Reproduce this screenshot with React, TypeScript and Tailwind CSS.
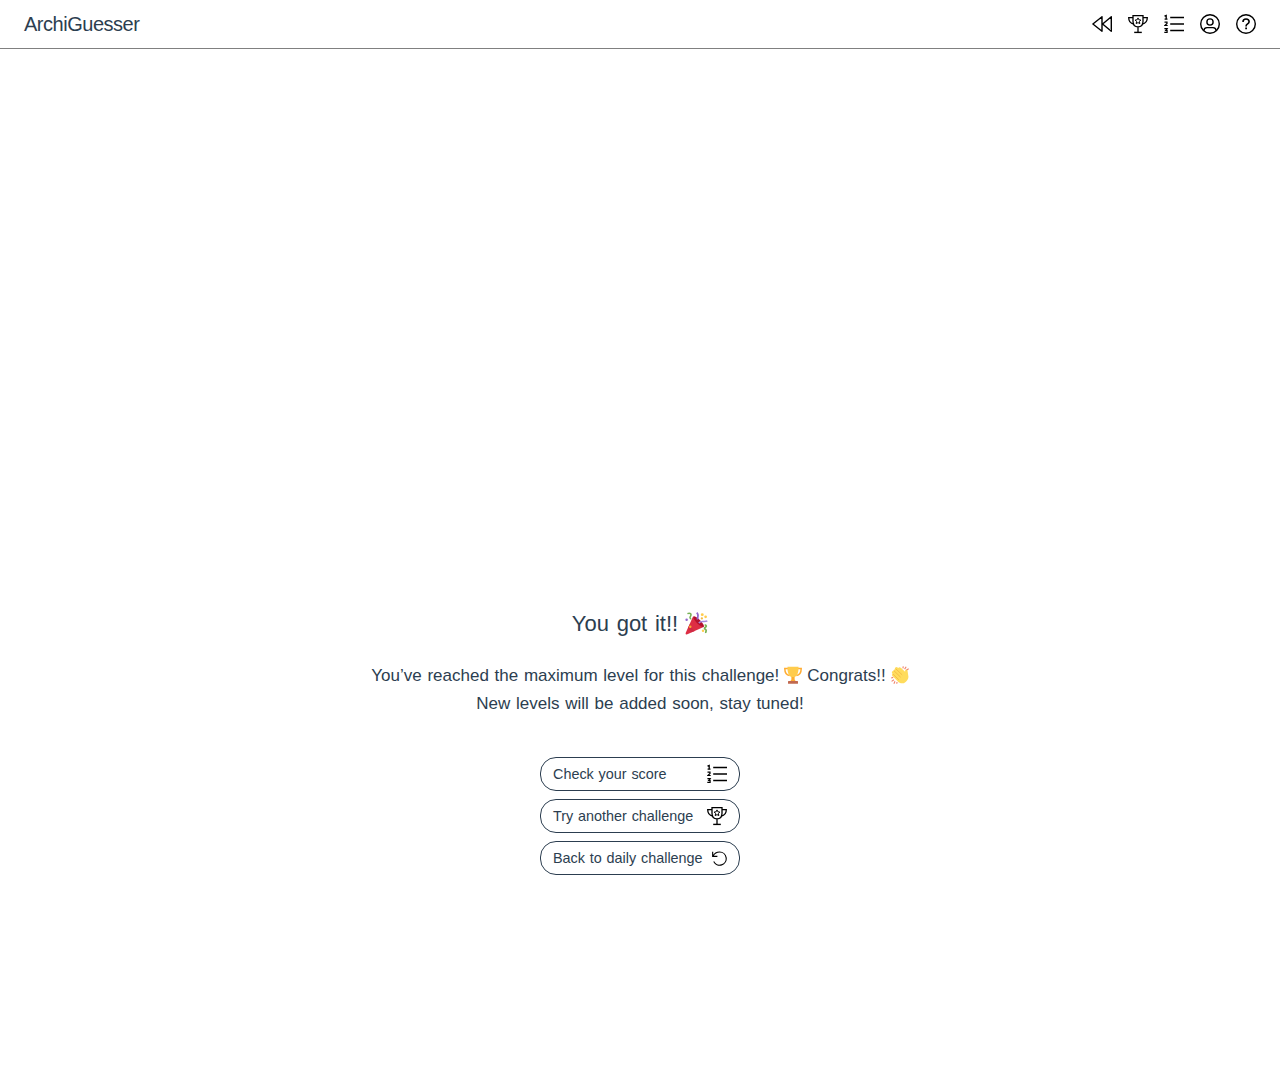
import type { ReactNode } from "react";

type IconProps = { className?: string };

function Icon({ children, className = "size-5" }: { children: ReactNode; className?: string }) {
  return (
    <svg viewBox="0 0 20 20" className={`${className} shrink-0 text-black`} fill="none" stroke="currentColor" strokeWidth="1.4">
      {children}
    </svg>
  );
}

const RewindIcon = () => (
  <Icon>
    <path d="M10 2.700v14.600L.9 10zM19.300 2.700v14.600L10.600 10z" strokeLinejoin="round" />
  </Icon>
);

const TrophyIcon = () => (
  <Icon>
    <path d="M5 1.600h10v5.600c0 3.300-2 5.600-5 5.600S5 10.500 5 7.200zM10 12.800v5.500" strokeWidth="1.300" />
    <path d="M6.200 18.400h7.600" strokeWidth="1.400" />
    <path d="M5 3.600H.700c0 3.500 1.500 6 5 6.400M15 3.600h4.300c0 3.500-1.500 6-5 6.400" strokeWidth="1.300" />
    <path d="M10 3.900l.9 1.900 2 .3-1.500 1.400.4 2.100-1.800-1-1.800 1 .4-2.100-1.500-1.400 2-.3z" strokeWidth="1" />
  </Icon>
);

const ListIcon = () => (
  <Icon>
    <path d="M6.200 3.500H20M6.200 10H20M6.200 16.500H20" strokeWidth="1.300" />
    <path d="M.5 2.100l1.700-.7v3.800M.6 5.200h2.900" strokeWidth="1.300" />
    <path d="M.5 8.200h2.500v1.300L.9 11.500h2.800" strokeWidth="1.200" />
    <path d="M.4 14.700h2.700L1.800 16.300h1.300v2.100H.3" strokeWidth="1.200" />
  </Icon>
);

const UserIcon = () => (
  <Icon>
    <circle cx="10" cy="10" r="9.300" />
    <circle cx="10" cy="8" r="3.100" />
    <path d="M3.900 16.800c0-2 1.200-3.200 3.100-3.200h6c1.900 0 3.100 1.200 3.100 3.200" />
  </Icon>
);

const HelpIcon = () => (
  <Icon>
    <circle cx="10" cy="10" r="9.300" />
    <path d="M7 7.900c0-1.800 1.200-2.900 3-2.900s3.100 1.100 3.100 2.700c0 2.100-3 2.100-3 4.200v.5" strokeWidth="1.600" />
    <path d="M10.100 13.500v1.800" strokeWidth="1.800" />
  </Icon>
);

const UndoIcon = () => (
  <Icon className="size-[15px]">
    <path d="M.9 1v6.200h6.300M1.500 6.700C3 3.500 6.300 1.300 10.200 1.300a8.800 8.800 0 1 1-7.900 12.800" strokeWidth="1.500" />
  </Icon>
);

function PartyEmoji({ className }: IconProps) {
  return (
    <svg viewBox="0 0 24 24" className={className} fill="none">
      <path d="M8.500 4.500C10 8 16 14 20 15.500L2.500 23.300C1 23.800.3 23 .8 21.600z" fill="#dd2e44" />
      <path d="M5.200 12.500c.8 3 2.500 5.500 5 7.200l-3.400 1.500C5 19.800 3.800 18 3.300 16.200z" fill="#cf2b45" />
      <ellipse cx="14.200" cy="10.100" rx="2.200" ry="7.600" transform="rotate(-45 14.200 10.100)" fill="#b3122d" />
      <path d="M2.500 1.700c3-1.300 4.500.5 3.300 2.500-1 1.600-.7 2.700.7 3" stroke="#77b255" strokeWidth="1.600" />
      <path d="M20.500 13.500c2.500.3 2 2 .4 2.700-1.200.8-.3 1.700.8 2.200 1.200.8-.3 1.800 0 3.500" stroke="#77b255" strokeWidth="1.800" />
      <path d="M12.200.8c2.800 2 .8 4.200.8 7" stroke="#9266cc" strokeWidth="1.800" />
      <path d="M14.500 11.500c2-3 5-.7 8.800-2" stroke="#a98be0" strokeWidth="1.700" />
      <circle cx="18" cy="2.800" r="1.500" fill="#ffcc4d" />
      <circle cx="21.500" cy="5" r="1.400" fill="#ffcc4d" />
      <circle cx="17.600" cy="6.700" r="1.200" fill="#f4b942" />
      <circle cx="18.800" cy="19.500" r="1.300" fill="#ffcc4d" />
      <circle cx="1.700" cy="8.200" r="1.300" fill="#9266cc" />
      <circle cx="5.500" cy="15.500" r="1.300" fill="#ffac33" />
    </svg>
  );
}

function CupEmoji({ className }: IconProps) {
  return (
    <svg viewBox="0 0 18 18" className={className} fill="none">
      <path d="M4 2.400H.8c0 4 1.200 6.600 4.900 7.200M14 2.400h3.200c0 4-1.200 6.600-4.900 7.200" stroke="#ffac33" strokeWidth="1.500" />
      <path d="M3.500.7h11c.2 5.300-1 9.100-4 10.500v4h-3v-4C4.500 9.800 3.300 6 3.500.7z" fill="#ffcc4d" />
      <path d="M7.600 11h2.800v2.400l1.700 2H5.900l1.700-2z" fill="#ffac33" />
      <rect x="4" y="15" width="10" height="2.700" rx=".5" fill="#c1694f" />
    </svg>
  );
}

function ClapEmoji({ className }: IconProps) {
  return (
    <svg viewBox="0 0 18 18" className={className} fill="none">
      <path d="M1.200 5.600L3.400 3.800 4.200 1.800q1-1.300 2.400-.2l.6.500q1-1.600 2.600-.4l4.300 4.100.2-1.700q1.300-1.500 2.200.3l.9 6c.3 2.600-2.600 6.700-5.600 6.900-2.200.2-3.800-.6-5.200-2.100L1.200 9.800q-.8-1.300.4-2.100-1.400-1-.4-2.100z" fill="#ffdc5d" />
      <path d="M4.800 2.800l6.400 6.100M2.900 4.700l6.700 6.500M1.800 7.900l6 5.900" stroke="#f2b544" strokeWidth=".8" />
      <path d="M12.300.3l-.4 2.100M15.200.7l-1.600 2.400M17.700 2.700l-2.200 1.300M.2 12l2-.6M.6 15.400L3 13.700M2.900 17.700l1.100-2.400M5.800 17.800l.2-1.800" stroke="#f0836b" strokeWidth="1.100" />
    </svg>
  );
}

function ActionButton({ children, icon }: { children: ReactNode; icon: ReactNode }) {
  return (
    <button className="flex h-[34px] w-[200px] items-center justify-between rounded-2xl border border-[#2c3e50] px-3 text-[14.4px] [word-spacing:0.8px]">
      <span className="pt-0.5 whitespace-nowrap">{children}</span>
      {icon}
    </button>
  );
}

export default function App() {
  return (
    <div className="flex min-h-screen flex-col bg-white font-['Liberation_Sans',sans-serif] text-[#2c3e50]">
      <header className="flex h-[49px] items-center justify-between border-b border-[#808080] px-6">
        <h1 className="text-[20px] tracking-[-0.48px]">ArchiGuesser</h1>
        <nav className="flex gap-4">
          <RewindIcon />
          <TrophyIcon />
          <ListIcon />
          <UserIcon />
          <HelpIcon />
        </nav>
      </header>
      <main className="flex flex-col items-center pt-[558px]">
        <h2 className="flex h-8 items-center gap-[7px] text-[22px] [word-spacing:1.6px]">
          You got it!!
          <PartyEmoji className="size-[23px]" />
        </h2>
        <div className="mt-[23px] flex flex-col items-center text-[17px] leading-7 [word-spacing:1px]">
          <p className="flex items-center gap-[5px] whitespace-nowrap">
            You’ve reached the maximum level for this challenge!
            <CupEmoji className="mb-0.5 size-[18px]" />
            Congrats!!
            <ClapEmoji className="mb-0.5 size-[18px]" />
          </p>
          <p>New levels will be added soon, stay tuned!</p>
        </div>
        <div className="mt-[39px] flex flex-col gap-2">
          <ActionButton icon={<ListIcon />}>Check your score</ActionButton>
          <ActionButton icon={<TrophyIcon />}>Try another challenge</ActionButton>
          <ActionButton icon={<UndoIcon />}>Back to daily challenge</ActionButton>
        </div>
      </main>
    </div>
  );
}
